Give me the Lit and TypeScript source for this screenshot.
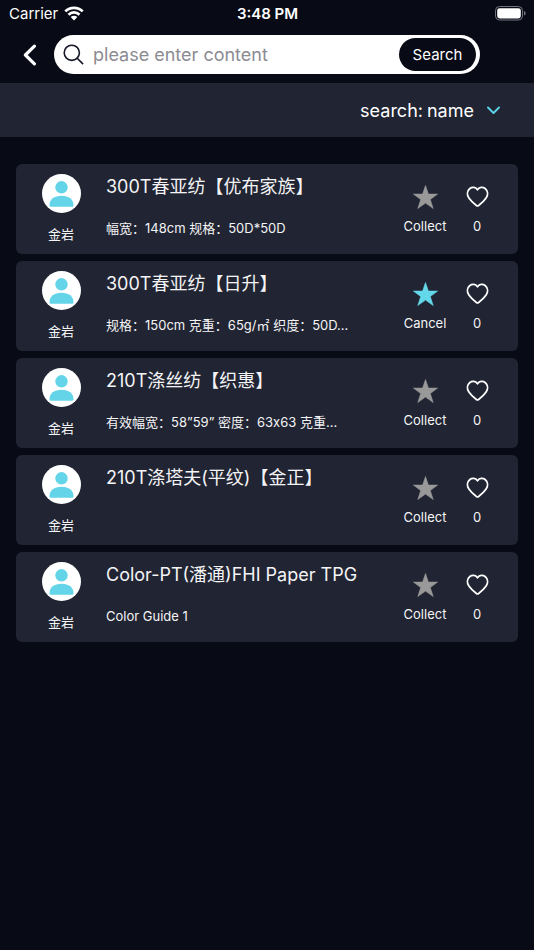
import { LitElement, css, html, svg } from "lit";
import { customElement, property, state } from "lit/decorators.js";
import { classMap } from "lit/directives/class-map.js";

interface Fabric {
  owner: string;
  title: string;
  detail: string;
  collected: boolean;
  likes: number;
}

const FABRICS: Fabric[] = [
  { owner: "金岩", title: "300T春亚纺【优布家族】", detail: "幅宽：148cm 规格：50D*50D", collected: false, likes: 0 },
  { owner: "金岩", title: "300T春亚纺【日升】", detail: "规格：150cm 克重：65g/㎡ 织度：50D...", collected: true, likes: 0 },
  { owner: "金岩", title: "210T涤丝纺【织惠】", detail: "有效幅宽：58”59” 密度：63x63 克重...", collected: false, likes: 0 },
  { owner: "金岩", title: "210T涤塔夫(平纹)【金正】", detail: "", collected: false, likes: 0 },
  { owner: "金岩", title: "Color-PT(潘通)FHI Paper TPG", detail: "Color Guide 1", collected: false, likes: 0 },
];

const starShape = svg`<path d="M12.500 0.500L15.400 9.100L24.600 9.100L17.300 14.600L20.200 23.500L12.500 18.100L4.800 23.500L7.700 14.600L0.400 9.100L9.600 9.100Z" fill="currentColor" stroke="currentColor" stroke-width="0.600" stroke-linejoin="round"/>`;

@customElement("status-bar")
export class StatusBar extends LitElement {
  static styles = css`
    :host {
      display: grid;
      grid-template-columns: 1fr auto 1fr;
      align-items: center;
      height: 27px;
      padding: 0 8px 0 9px;
      font-size: 15px;
    }
    .carrier {
      display: flex;
      align-items: center;
      gap: 6px;
    }
    .time {
      font-weight: 600;
    }
    .battery {
      justify-self: end;
      display: block;
    }
    svg {
      display: block;
    }
  `;

  render() {
    return html`
      <div class="carrier">
        <span>Carrier</span>
        <svg width="20" height="15" viewBox="0 0 20 15" aria-hidden="true">
          <g fill="none" stroke="#fff" stroke-width="2.700">
            <path d="M1.300 5.400A12.300 12.300 0 0 1 18.700 5.400" />
            <path d="M4.500 8.700A7.800 7.800 0 0 1 15.500 8.700" />
          </g>
          <path d="M10 14.400L6.700 11.100A4.700 4.700 0 0 1 13.300 11.100Z" fill="#fff" />
        </svg>
      </div>
      <span class="time">3:48 PM</span>
      <svg class="battery" width="31" height="15" viewBox="0 0 31 15" aria-hidden="true">
        <rect x="0.500" y="0.500" width="27" height="13.500" rx="4" fill="none" stroke="#71737c" />
        <rect x="2.200" y="2.200" width="23.600" height="10.200" rx="2.400" fill="#fff" />
        <path d="M29 5C31.200 5.600 31.200 9 29 9.600Z" fill="#71737c" />
      </svg>
    `;
  }
}

@customElement("fabric-card")
export class FabricCard extends LitElement {
  @property({ attribute: false }) fabric!: Fabric;
  @state() private collected = false;

  static styles = css`
    :host {
      display: grid;
      grid-template-columns: 90px minmax(0, 1fr) 60px 44px;
      height: 90px;
      padding-right: 19px;
      box-sizing: border-box;
      border-radius: 6px;
      background: #212432;
      color: #f4f4f6;
      font-size: 13px;
      line-height: 18px;
    }
    .owner {
      display: flex;
      flex-direction: column;
      align-items: center;
      gap: 12px;
      padding-top: 10px;
    }
    .info {
      padding-top: 10px;
      white-space: nowrap;
    }
    .title,
    .detail {
      margin: 0;
      overflow: hidden;
      text-overflow: ellipsis;
      font-weight: 400;
    }
    .title {
      font-size: 18px;
      line-height: 26px;
    }
    .detail {
      margin-top: 19px;
    }
    .action {
      display: flex;
      flex-direction: column;
      align-items: center;
      gap: 7px;
      height: 71px;
      margin: 0;
      padding: 21px 0 0;
      border: 0;
      background: none;
      color: inherit;
      font: inherit;
      cursor: pointer;
    }
    .star {
      color: #999;
    }
    .star.on {
      color: #64d8ea;
    }
    svg {
      display: block;
    }
  `;

  willUpdate(changed: Map<string, unknown>) {
    if (changed.has("fabric")) this.collected = this.fabric.collected;
  }

  render() {
    const f = this.fabric;
    return html`
      <div class="owner">
        <svg width="39" height="39" viewBox="0 0 39 39" aria-hidden="true">
          <circle cx="19.500" cy="19.500" r="19.500" fill="#fff" />
          <circle cx="19.500" cy="13.300" r="6.200" fill="#64d5e8" />
          <path d="M8.900 32.800Q7.500 32.800 7.500 31.400C7.500 25.500 12 21.800 19.500 21.800S31.500 25.500 31.500 31.400Q31.500 32.800 30.100 32.800Z" fill="#64d5e8" />
        </svg>
        <span>${f.owner}</span>
      </div>
      <div class="info">
        <h2 class="title">${f.title}</h2>
        <p class="detail">${f.detail}</p>
      </div>
      <button class="action" @click=${() => (this.collected = !this.collected)}>
        <svg class=${classMap({ star: true, on: this.collected })} width="25" height="25" viewBox="0 0 25 25" aria-hidden="true">${starShape}</svg>
        <span>${this.collected ? "Cancel" : "Collect"}</span>
      </button>
      <button class="action" aria-label="Like, ${f.likes}">
        <svg width="25" height="25" viewBox="0 0 25 25" aria-hidden="true">
          <path d="M12.500 4.700C10.500 2 7.200 1.700 4.900 3.500C1.900 6 1.800 9.900 3.900 12.900C5.700 15.500 8.800 18.500 11.400 20.500Q12.500 21.300 13.600 20.500C16.200 18.500 19.300 15.500 21.100 12.900C23.200 9.900 23.100 6 20.100 3.500C17.800 1.700 14.500 2 12.500 4.700Z" fill="none" stroke="#fff" stroke-width="1.800" stroke-linejoin="round" />
        </svg>
        <span>${f.likes}</span>
      </button>
    `;
  }
}

@customElement("app-root")
export class AppRoot extends LitElement {
  static styles = css`
    :host {
      display: block;
      min-height: 100vh;
      background: #080a15;
      color: #fff;
      font-family: Inter, "Noto Sans CJK SC", sans-serif;
    }
    .top {
      display: flex;
      align-items: center;
      padding: 8px 54px 9px 0;
    }
    .back {
      display: flex;
      justify-content: flex-end;
      width: 54px;
      padding: 0 17px 0 0;
      border: 0;
      background: none;
      cursor: pointer;
    }
    .search {
      flex: 1;
      display: flex;
      align-items: center;
      gap: 9px;
      height: 39px;
      padding: 0 4px 0 9px;
      box-sizing: border-box;
      border-radius: 20px;
      background: #fff;
    }
    .field {
      flex: 1;
      min-width: 0;
      padding: 0;
      border: 0;
      outline: 0;
      background: none;
      color: #080a15;
      font: inherit;
      font-size: 18px;
    }
    .field::placeholder {
      color: #8b8b92;
      opacity: 1;
    }
    .submit {
      width: 77px;
      height: 33px;
      padding: 0;
      border: 0;
      border-radius: 17px;
      background: #080a15;
      color: #fff;
      font: inherit;
      font-size: 15px;
      cursor: pointer;
    }
    .filter {
      display: flex;
      align-items: center;
      justify-content: flex-end;
      height: 54px;
      padding-right: 34px;
      background: #212432;
      font-size: 18px;
    }
    .picker {
      display: grid;
      align-items: center;
      margin-left: 4px;
    }
    .picker > * {
      grid-area: 1 / 1;
    }
    .picker svg {
      justify-self: end;
      pointer-events: none;
    }
    .select {
      appearance: none;
      field-sizing: content;
      padding: 0 26px 0 0;
      border: 0;
      background: none;
      color: inherit;
      font: inherit;
    }
    .select option {
      background: #212432;
    }
    .list {
      display: flex;
      flex-direction: column;
      gap: 7px;
      margin: 0;
      padding: 27px 16px;
    }
    svg {
      display: block;
    }
  `;

  render() {
    return html`
      <status-bar></status-bar>
      <header class="top">
        <button class="back" aria-label="Back">
          <svg width="14" height="22" viewBox="0 0 14 22" aria-hidden="true">
            <path d="M11.400 2.200L2.400 11L11.400 19.800" fill="none" stroke="#fff" stroke-width="3.200" stroke-linecap="round" stroke-linejoin="round" />
          </svg>
        </button>
        <form class="search" role="search" @submit=${(e: Event) => e.preventDefault()}>
          <svg width="21" height="21" viewBox="0 0 21 21" aria-hidden="true">
            <g fill="none" stroke="#16182a" stroke-width="1.600" stroke-linecap="round">
              <circle cx="8.800" cy="8.800" r="7.600" />
              <path d="M14.200 14.200L19.600 19.600" />
            </g>
          </svg>
          <input class="field" type="text" placeholder="please enter content" aria-label="Search content" />
          <button class="submit" type="submit">Search</button>
        </form>
      </header>
      <div class="filter">
        <label for="by">search:</label>
        <div class="picker">
          <select id="by" class="select">
            <option>name</option>
          </select>
          <svg width="13" height="9" viewBox="0 0 13 9" aria-hidden="true">
            <path d="M1 1.500L6.500 7L12 1.500" fill="none" stroke="#5cd3e8" stroke-width="1.900" stroke-linecap="round" stroke-linejoin="round" />
          </svg>
        </div>
      </div>
      <main class="list">
        ${FABRICS.map((f) => html`<fabric-card .fabric=${f}></fabric-card>`)}
      </main>
    `;
  }
}
